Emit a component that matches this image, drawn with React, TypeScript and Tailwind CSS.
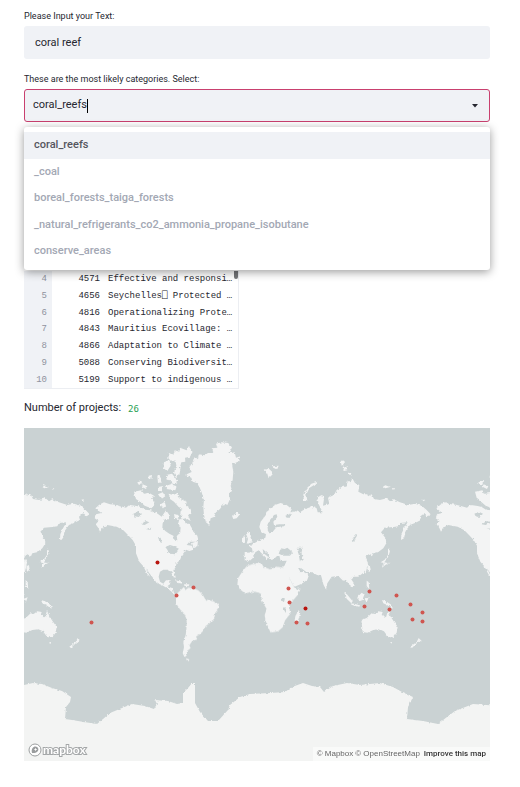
import { useState } from "react";

const categories = [
  "coral_reefs",
  "_coal",
  "boreal_forests_taiga_forests",
  "_natural_refrigerants_co2_ammonia_propane_isobutane",
  "conserve_areas",
];

const projects: [number, number, string][] = [
  [4, 4571, "Effective and responsi…"],
  [5, 4656, "Seychelles⎕ Protected …"],
  [6, 4816, "Operationalizing Prote…"],
  [7, 4843, "Mauritius Ecovillage: …"],
  [8, 4866, "Adaptation to Climate …"],
  [9, 5088, "Conserving Biodiversit…"],
  [10, 5199, "Support to indigenous …"],
];

const pins: [number, number, boolean][] = [
  [91, 622, false], [157, 562, true], [176, 595, false], [193, 587, false],
  [288, 588, false], [289, 602, false], [305, 608, true], [296, 622, false],
  [307, 623, false], [369, 591, false], [364, 606, false], [389, 609, false],
  [396, 595, false], [410, 604, false], [422, 612, false], [412, 619, false],
  [422, 621, false],
];

function Continents() {
  return (
    <g id="continents">
      {/* North America, the Arctic islands and Greenland */}
      <g transform="translate(130 425) scale(.3333)">
        <path d="M-102 268L-86 264L-104 250L-90 238L-78 232L-60 238L-45 239L-30 243L-12 248L-5 242L0 240L20 243L32 246L45 254L62 256L80 264L95 275L108 256L120 272L118 284L105 282L98 295L97 308L106 318L118 326L130 332L134 348L142 346L140 332L150 325L152 308L145 295L148 283L160 282L168 296L178 296L185 308L190 320L202 332L205 345L195 350L178 350L170 360L186 362L190 374L178 378L168 374L155 392L150 405L140 415L136 428L130 436L137 455L132 458L124 440L115 434L100 434L90 440L86 455L90 470L100 476L108 466L122 466L120 478L112 484L128 490L132 505L145 514L140 518L125 500L112 490L95 480L80 474L72 462L58 445L48 430L60 455L52 448L40 424L28 410L18 385L18 362L8 345L-6 330L-20 316L-40 305L-68 300L-80 306L-90 320L-95 309L-103 298L-94 288L-106 280Z" />
        <path d="M165 150L185 141L178 127L188 112L193 94L204 103L207 88L224 91L235 83L250 80L245 70L262 68L258 56L275 52L295 54L305 72L298 85L314 82L318 98L332 94L324 110L306 118L310 140L308 165L302 182L306 197L298 208L300 222L292 240L282 235L270 252L258 262L252 276L242 280L238 300L228 292L222 270L220 245L222 225L215 202L208 185L200 174L188 170L184 158Z" />
        <path d="M115 100L117 84L130 90L134 76L148 80L150 68L170 76L176 64L188 80L180 95L165 98L166 110L154 112L150 125L140 127L136 106L125 110ZM102 112L118 105L122 122L112 138L100 130ZM138 128L152 130L148 150L138 156L132 144ZM108 150L126 146L136 158L142 172L128 178L124 166L110 164ZM105 184L122 178L140 184L136 196L112 192ZM82 154L90 150L94 172L84 174ZM84 186L96 184L96 198L84 198ZM56 152L66 150L64 162L56 162ZM22 172L36 168L34 180L24 176ZM12 200L34 196L42 206L58 204L72 212L66 222L76 238L64 250L44 242L32 232L18 222ZM84 208L98 202L106 214L94 222ZM92 238L104 230L108 244L98 250ZM116 206L130 210L140 205L152 222L170 230L168 242L182 252L184 266L174 270L182 288L168 280L158 282L150 262L158 252L146 246L132 230L120 222ZM132 268L146 270L144 282L134 278ZM38 178L52 184L48 192L36 186Z" />
        <path d="M306 272L314 268L322 262L328 270L320 280L310 282ZM186 354L204 348L202 364L190 366Z" />
        <path d="M130 466L148 468L160 476L146 474ZM162 478L178 478L176 484L164 483Z" />
      </g>

      {/* South America and Africa */}
      <g transform="translate(170 560) scale(.3333)">
        <path d="M18 104L28 94L40 83L46 90L56 83L70 86L84 90L98 104L106 118L130 124L147 134L144 148L135 160L133 176L118 190L107 198L102 210L90 222L78 230L82 238L66 244L58 256L62 264L50 274L52 284L44 292L38 280L42 262L40 245L47 225L50 200L50 178L42 160L30 148L18 130ZM48 295L58 298L56 304L50 301Z" />
        <path d="M230 18L248 12L275 10L280 20L300 28L320 20L346 24L352 32L358 52L370 78L378 88L392 86L385 102L372 118L358 130L357 145L362 160L352 172L345 182L338 202L324 214L302 218L296 205L286 180L284 165L290 147L280 130L274 116L276 104L266 98L250 95L225 100L210 88L202 75L204 55L215 38ZM376 168L386 150L391 160L382 188L374 184Z" />
      </g>

      {/* Europe and Asia */}
      <g transform="translate(240 425) scale(.3333)">
        <path d="M14 404L14 384L38 382L36 370L28 364L48 352L62 344L76 338L78 328L64 320L58 306L62 290L76 272L88 252L105 240L122 234L140 240L155 252L150 265L165 258L180 262L195 252L215 245L230 250L233 262L248 262L236 238L231 218L245 210L252 222L249 242L268 237L264 218L282 210L290 195L306 185L318 185L324 168L332 172L337 160L345 174L358 180L355 200L370 208L382 208L384 214L395 208L402 222L420 225L440 220L450 229L460 223L480 232L505 240L525 236L545 242L560 255L572 268L563 274L553 264L540 275L543 285L525 294L510 300L497 318L492 340L483 345L484 328L492 310L503 292L480 294L475 304L460 306L435 308L423 322L437 340L439 355L430 370L414 382L400 385L396 394L385 388L376 396L384 414L380 428L370 443L355 455L342 455L332 460L345 480L338 487L326 477L318 465L310 468L295 453L275 455L262 475L258 494L250 478L244 454L230 449L215 442L198 440L184 430L174 428L182 442L190 440L207 450L202 464L185 476L162 486L152 466L140 445L130 430L140 407L122 408L118 392L104 396L96 406L88 398L84 386L72 376L68 372L70 384L88 398L82 402L64 384L56 376L46 382L38 400L26 410Z" />
        <path d="M18 326L28 322L30 334L38 352L20 356L24 342ZM6 340L15 334L15 350L6 352Z" />
        <path d="M74 134L88 128L98 148L86 160L82 146ZM94 124L116 122L112 132L102 130ZM192 228L190 208L202 188L214 176L232 170L226 178L209 188L199 208L202 228ZM302 108L310 105L312 118L305 122ZM308 126L318 122L322 136L312 138ZM324 145L334 142L332 152ZM429 185L436 181L450 186L436 190ZM456 190L466 190L462 194ZM548 223L556 225L550 229ZM426 428L436 420L452 412L444 414L432 412L428 420Z" />
        <path d="M444 370L450 378L446 392L432 414L422 412L434 404L444 390ZM382 424L390 420L392 434L384 440ZM372 424L381 428L376 447Z" />
      </g>

      {/* South-east Asia and Oceania */}
      <g transform="translate(330 560) scale(.3333)">
        <path d="M94 180L110 174L125 160L134 162L145 154L158 156L155 165L168 172L174 152L182 170L192 185L203 200L200 218L190 232L175 232L162 214L148 208L130 210L112 218L98 216ZM182 246L186 246L185 252L181 250Z" />
        <path d="M82 112L95 98L104 104L98 120L88 124ZM42 96L52 104L68 124L64 130L50 116ZM66 130L90 136L88 140L68 136ZM104 116L116 112L110 128ZM156 120L168 124L186 136L188 146L170 134L160 130ZM110 62L116 66L118 88L110 78ZM266 234L272 240L258 252L246 264L241 260L260 246Z" />
      </g>
    </g>
  );
}

function InlandWater() {
  return (
    <g fill="#cad2d3">
      <g transform="translate(240 425) scale(.3333)">
        <path d="M116 386L122 370L134 372L142 368L158 382L150 392L130 392ZM170 368L188 368L184 385L191 405L180 410L176 388ZM84 318L82 300L90 285L102 270L110 268L112 276L100 290L102 300L118 298L138 298L132 304L110 306L100 318L90 326ZM136 272L152 266L150 278L140 278ZM334 350L350 326L351 332L340 350Z" />
      </g>
      <g transform="translate(130 425) scale(.3333)">
        <path d="M106 366L120 360L132 364L148 372L136 388L118 386L112 374ZM10 266L24 260L36 266L26 276L14 274ZM32 298L48 288L58 292L44 300ZM84 340L92 338L96 354L88 350ZM46 312L64 308L60 314Z" />
      </g>
      <path d="M282 598L285 598L284 602L281 601ZM284 607L286 609L286 613L284 610Z" />
    </g>
  );
}

function WorldMap() {
  return (
    <svg viewBox="24 428 466 333" className="block w-full bg-[#cad2d3]" role="img" aria-label="Project locations">
      <defs>
        <filter id="coast" x="-5%" y="-5%" width="110%" height="110%">
          <feTurbulence type="fractalNoise" baseFrequency="0.35" numOctaves="2" seed="4" />
          <feDisplacementMap in="SourceGraphic" scale="3" xChannelSelector="R" yChannelSelector="G" />
        </filter>
        <g id="world">
          <g fill="#f3f4f4">
            <Continents />
          </g>
          <InlandWater />
        </g>
      </defs>
      <g filter="url(#coast)">
        <use href="#world" x="-341" />
        <use href="#world" />
        <use href="#world" x="341" />
        <path
          fill="#f3f4f3"
          d="M14 684L24 685L33 683L42 684L52 688L62 691L71 697L70 702L66 707L65 719L72 720L84 722L97 724L103 719L110 713L122 708L132 704L145 706L154 709L157 704L155 700L168 701L177 704L183 703L183 693L188 688L192 683L195 683L195 703L200 712L208 721L218 721L228 710L230 705L240 697L250 694L270 693L285 692L292 687L303 683L312 686L320 687L324 692L333 686L347 683L360 685L380 683L393 687L402 692L413 697L408 707L407 719L423 721L438 724L447 717L455 711L473 704L500 706L500 775L14 775Z"
        />
      </g>
      {pins.map(([x, y, strong]) => (
        <circle key={`${x}-${y}`} cx={x + 0.5} cy={y + 0.5} r="2" fill={strong ? "#b8150f" : "#cf5650"} />
      ))}
    </svg>
  );
}

function MapboxLogo() {
  return (
    <a href="#mapbox" aria-label="mapbox" className="absolute bottom-1 left-1 flex items-center gap-px">
      <svg viewBox="0 0 14 14" className="size-[14px]" aria-hidden="true">
        <circle cx="7" cy="7" r="6" fill="#fff" stroke="#9a9d9e" />
        <path d="M4 10C3 6 5 3.500 7.500 3.500A2.900 2.900 0 0 1 9.500 8.500C8 10 6 10.200 4 10Z" fill="#9a9d9e" />
        <path d="M7.500 4.700L8.100 6L9.300 6.500L8.100 7.100L7.500 8.300L7 7.100L5.700 6.500L7 6Z" fill="#fff" />
      </svg>
      <span className="font-['Lato',sans-serif] text-[12px] leading-[14px] font-bold text-white [-webkit-text-stroke:2px_#a4a7a8] [paint-order:stroke_fill]">
        mapbox
      </span>
    </a>
  );
}

export default function App() {
  const [text, setText] = useState("coral reef");
  const [category, setCategory] = useState("coral_reefs");

  return (
    <main className="bg-white pt-2 pr-[30px] pb-[26px] pl-6 font-['Roboto',sans-serif] text-[#262730]">
      <label htmlFor="query" className="block text-[9px] leading-4">
        Please Input your Text:
      </label>
      <input
        id="query"
        value={text}
        onChange={(e) => setText(e.target.value)}
        className="mt-0.5 block h-[33px] w-full rounded-[3px] bg-[#f0f2f6] px-[11px] text-[11px] outline-none"
      />

      <label htmlFor="category" className="mt-3 block text-[9px] leading-4">
        These are the most likely categories. Select:
      </label>
      <div className="relative mt-0.5">
        <div className="flex h-[33px] items-center rounded-[3px] border border-[#c9406f] bg-[#f0f2f6] pr-[11px] pl-2">
          <input
            id="category"
            role="combobox"
            aria-expanded="true"
            aria-controls="category-list"
            value={category}
            onChange={(e) => setCategory(e.target.value)}
            className="field-sizing-content bg-transparent text-[11px] outline-none"
          />
          <span className="h-[14px] w-px bg-black" />
          <svg viewBox="0 0 6 4" className="ml-auto h-1 w-[6px]" aria-hidden="true">
            <path d="M0 0H6L3 3.500Z" fill="#262730" />
          </svg>
        </div>
        <ul
          id="category-list"
          role="listbox"
          aria-label="Categories"
          className="absolute inset-x-0 top-[38px] z-10 flex h-[143px] flex-col rounded-[3px] bg-white pt-[5px] pb-[5px] shadow-[0_2px_10px_rgba(0,0,0,0.4)]"
        >
          {categories.map((name) => (
            <li
              key={name}
              role="option"
              aria-selected={name === category}
              onClick={() => setCategory(name)}
              className="flex flex-1 items-center px-[10px] text-[11px] font-medium text-[#a3a8b4] aria-selected:bg-[#f0f2f6] aria-selected:text-[#55565e]"
            >
              {name}
            </li>
          ))}
        </ul>
      </div>

      <div className="relative mt-[149px] w-[215px] border-r border-b border-[#eceef2]">
        <table className="h-[117px] w-full table-fixed border-collapse font-['Liberation_Mono',monospace] text-[9px] leading-3">
          <tbody>
            {projects.map(([index, id, title]) => (
              <tr key={index}>
                <th scope="row" className="w-7 bg-[#f0f2f6] pr-[5px] text-right font-normal text-[#8f939e]">
                  {index}
                </th>
                <td className="w-12 text-right">{id}</td>
                <td className="pl-2 whitespace-nowrap">{title}</td>
              </tr>
            ))}
          </tbody>
        </table>
        <div className="absolute top-0 right-0 h-2 w-1 rounded-b-sm bg-[#757679]" />
      </div>

      <p className="mt-[10px] flex items-center gap-[7px] text-[11px] leading-[18px]">
        Number of projects:
        <code className="pt-0.5 font-['DejaVu_Sans_Mono',monospace] text-[9px] leading-4 text-[#28a053]">26</code>
      </p>

      <section className="relative mt-[11px]" aria-label="Map">
        <WorldMap />
        <MapboxLogo />
        <div className="absolute right-0 bottom-0 flex gap-1 bg-white/50 px-1 font-['Liberation_Sans',sans-serif] text-[8px] leading-[14px] text-[#666]">
          <span className="flex gap-[2px]">
            <a href="#mapbox-about">© Mapbox</a>
            <a href="#openstreetmap">© OpenStreetMap</a>
          </span>
          <a href="#improve" className="font-['Roboto',sans-serif] font-medium text-[#333]">
            Improve this map
          </a>
        </div>
      </section>
    </main>
  );
}
